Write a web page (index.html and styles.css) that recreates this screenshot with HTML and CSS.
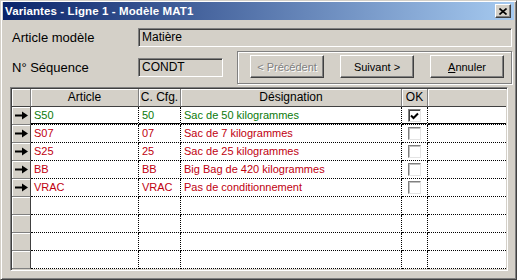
FILE: index.html
```html
<!DOCTYPE html>
<html lang="fr">
<head>
    <meta charset="UTF-8">
    <title>Variantes</title>
    <link rel="stylesheet" href="styles.css">
</head>
<body>
    <div class="window">
        <div class="titlebar">
            <span class="title">Variantes - Ligne 1 - Modèle MAT1</span>
            <span class="close-btn">
                <svg width="8" height="7" viewBox="0 0 8 7"><path d="M0.5 0.5 L7.5 6.5 M7.5 0.5 L0.5 6.5" stroke="#000" stroke-width="1.6" fill="none"/></svg>
            </span>
        </div>
        <div class="content">
            <div class="field-row">
                <span class="field-label">Article modèle</span>
                <div class="field-box wide">Matière</div>
            </div>
            <div class="field-row second">
                <span class="field-label">N° Séquence</span>
                <div class="field-box short">CONDT</div>
                <div class="button-group">
                    <button class="btn" disabled>&lt; Précédent</button>
                    <button class="btn">Suivant &gt;</button>
                    <button class="btn"><u>A</u>nnuler</button>
                </div>
            </div>

            <div class="grid">
                <div class="grid-row header">
                    <div class="cell ind"></div>
                    <div class="cell">Article</div>
                    <div class="cell">C. Cfg.</div>
                    <div class="cell">Désignation</div>
                    <div class="cell">OK</div>
                    <div class="cell last"></div>
                </div>
                <div class="grid-row current green">
                    <div class="cell ind"><svg class="arrow" width="13" height="9" viewBox="0 0 13 9"><rect x="0" y="3.5" width="9" height="2"/><polygon points="7,0.5 13,4.5 7,8.5"/></svg></div>
                    <div class="cell">S50</div>
                    <div class="cell">50</div>
                    <div class="cell">Sac de 50 kilogrammes</div>
                    <div class="cell ok"><span class="check on"><svg width="9" height="8" viewBox="0 0 9 8"><path d="M1 3.5 L3.5 6 L8 1.5" stroke="#000" stroke-width="2" fill="none"/></svg></span></div>
                    <div class="cell last"></div>
                </div>
                <div class="grid-row red">
                    <div class="cell ind"><svg class="arrow" width="13" height="9" viewBox="0 0 13 9"><rect x="0" y="3.5" width="9" height="2"/><polygon points="7,0.5 13,4.5 7,8.5"/></svg></div>
                    <div class="cell">S07</div>
                    <div class="cell">07</div>
                    <div class="cell">Sac de 7 kilogrammes</div>
                    <div class="cell ok"><span class="check"></span></div>
                    <div class="cell last"></div>
                </div>
                <div class="grid-row red">
                    <div class="cell ind"><svg class="arrow" width="13" height="9" viewBox="0 0 13 9"><rect x="0" y="3.5" width="9" height="2"/><polygon points="7,0.5 13,4.5 7,8.5"/></svg></div>
                    <div class="cell">S25</div>
                    <div class="cell">25</div>
                    <div class="cell">Sac de 25 kilogrammes</div>
                    <div class="cell ok"><span class="check"></span></div>
                    <div class="cell last"></div>
                </div>
                <div class="grid-row red">
                    <div class="cell ind"><svg class="arrow" width="13" height="9" viewBox="0 0 13 9"><rect x="0" y="3.5" width="9" height="2"/><polygon points="7,0.5 13,4.5 7,8.5"/></svg></div>
                    <div class="cell">BB</div>
                    <div class="cell">BB</div>
                    <div class="cell">Big Bag de 420 kilogrammes</div>
                    <div class="cell ok"><span class="check"></span></div>
                    <div class="cell last"></div>
                </div>
                <div class="grid-row red">
                    <div class="cell ind"><svg class="arrow" width="13" height="9" viewBox="0 0 13 9"><rect x="0" y="3.5" width="9" height="2"/><polygon points="7,0.5 13,4.5 7,8.5"/></svg></div>
                    <div class="cell">VRAC</div>
                    <div class="cell">VRAC</div>
                    <div class="cell">Pas de conditionnement</div>
                    <div class="cell ok"><span class="check"></span></div>
                    <div class="cell last"></div>
                </div>
                <div class="grid-row">
                    <div class="cell ind"></div><div class="cell"></div><div class="cell"></div><div class="cell"></div><div class="cell"></div><div class="cell last"></div>
                </div>
                <div class="grid-row">
                    <div class="cell ind"></div><div class="cell"></div><div class="cell"></div><div class="cell"></div><div class="cell"></div><div class="cell last"></div>
                </div>
                <div class="grid-row">
                    <div class="cell ind"></div><div class="cell"></div><div class="cell"></div><div class="cell"></div><div class="cell"></div><div class="cell last"></div>
                </div>
                <div class="grid-row">
                    <div class="cell ind"></div><div class="cell"></div><div class="cell"></div><div class="cell"></div><div class="cell"></div><div class="cell last"></div>
                </div>
            </div>
        </div>
    </div>
</body>
</html>
```

FILE: styles.css
```css
body {
    margin: 0px;
    font-family: "Liberation Sans", Arial, sans-serif;
    font-size: 11px;
    background-color: #d4d0c8;
}

.window {
    width: 517px;
    height: 280px;
    box-sizing: border-box;
    background-color: #d4d0c8;
    border-top: 1px solid #d4d0c8;
    border-left: 1px solid #d4d0c8;
    border-right: 1px solid #404040;
    border-bottom: 1px solid #404040;
    box-shadow: inset 1px 1px 0 #fff, inset -1px -1px 0 #808080;
    padding: 1px 2px 2px 2px;
}

.titlebar {
    height: 18px;
    display: flex;
    align-items: center;
    justify-content: space-between;
    background: linear-gradient(to right, #0a246a, #a6caf0);
    padding: 0 3px 0 2px;
}

.title {
    color: #fff;
    font-weight: bold;
    font-size: 11.5px;
    letter-spacing: 0.1px;
}

.close-btn {
    width: 16px;
    height: 14px;
    box-sizing: border-box;
    background-color: #d4d0c8;
    border-top: 1px solid #fff;
    border-left: 1px solid #fff;
    border-right: 1px solid #404040;
    border-bottom: 1px solid #404040;
    box-shadow: inset -1px -1px 0 #808080;
    display: flex;
    align-items: center;
    justify-content: center;
}

.content {
    padding: 8px 0 0 7px;
}

.field-row {
    display: flex;
    align-items: center;
    height: 19px;
}

.field-row.second {
    margin-top: 4px;
    height: 33px;
}

.field-label {
    width: 126px;
    padding-left: 2px;
    font-size: 13px;
    color: #000;
}

.field-box {
    height: 19px;
    box-sizing: border-box;
    border-top: 1px solid #808080;
    border-left: 1px solid #808080;
    border-right: 1px solid #fff;
    border-bottom: 1px solid #fff;
    box-shadow: inset 1px 1px 0 #404040, inset -1px -1px 0 #d4d0c8;
    padding: 0 3px;
    line-height: 17px;
    font-size: 12px;
}

.field-box.wide {
    width: 374px;
}

.field-box.short {
    width: 85px;
}

.button-group {
    margin-left: 14px;
    width: 275px;
    height: 33px;
    box-sizing: border-box;
    border: 1px solid #808080;
    box-shadow: inset 1px 1px 0 #fff, 1px 1px 0 #fff;
    display: flex;
    gap: 16px;
    padding: 3px 0 0 12px;
}

.btn {
    width: 74px;
    height: 23px;
    box-sizing: border-box;
    background-color: #d4d0c8;
    font-family: "Liberation Sans", Arial, sans-serif;
    font-size: 11px;
    color: #000;
    border-top: 1px solid #fff;
    border-left: 1px solid #fff;
    border-right: 1px solid #404040;
    border-bottom: 1px solid #404040;
    box-shadow: inset -1px -1px 0 #808080;
    padding: 0;
}

.btn:disabled {
    color: #808080;
    text-shadow: 1px 1px 0 #fff;
}

.grid {
    margin-top: 3px;
    width: 498px;
    box-sizing: border-box;
    border-top: 1px solid #808080;
    border-left: 1px solid #808080;
    border-right: 1px solid #fff;
    border-bottom: 1px solid #fff;
    box-shadow: inset 1px 1px 0 #404040, inset -1px -1px 0 #d4d0c8;
    padding: 1px;
    background-color: #fff;
}

.grid-row {
    display: grid;
    grid-template-columns: 19px 108px 42px 221px 26px 1fr;
    height: 18px;
}

.cell {
    box-sizing: border-box;
    border-right: 1px dotted #000;
    border-bottom: 1px dotted #000;
    padding-left: 3px;
    line-height: 17px;
    white-space: nowrap;
    overflow: hidden;
}

.cell.last {
    border-right: none;
}

.cell.ind {
    padding: 0;
    background-color: #d4d0c8;
    border-right: 1px solid #404040;
    border-bottom: 1px solid #808080;
    box-shadow: inset 1px 1px 0 #fff;
    display: flex;
    align-items: center;
    justify-content: center;
}

.header .cell {
    background-color: #d4d0c8;
    border-right: 1px solid #808080;
    border-bottom: 1px solid #404040;
    box-shadow: inset 1px 1px 0 #fff;
    text-align: center;
    padding: 0;
    font-size: 12px;
}

.header .cell.last {
    border-right: none;
}

.current .cell {
    box-shadow: inset 0 -1px 0 #000;
}

.current .cell.ind {
    box-shadow: inset 1px 1px 0 #fff;
}

.green .cell {
    color: #0b7a0b;
}

.red .cell {
    color: #c00010;
}

.cell.ok {
    padding: 0;
    display: flex;
    align-items: center;
    justify-content: center;
}

.check {
    width: 13px;
    height: 13px;
    box-sizing: border-box;
    background-color: #fff;
    border-top: 1px solid #808080;
    border-left: 1px solid #808080;
    border-right: 1px solid #e4e4e4;
    border-bottom: 1px solid #e4e4e4;
    box-shadow: inset 1px 1px 0 #c0c0c0;
    display: flex;
    align-items: center;
    justify-content: center;
}

.check.on {
    box-shadow: inset 1px 1px 0 #404040;
}

.arrow {
    fill: #000;
}
```
